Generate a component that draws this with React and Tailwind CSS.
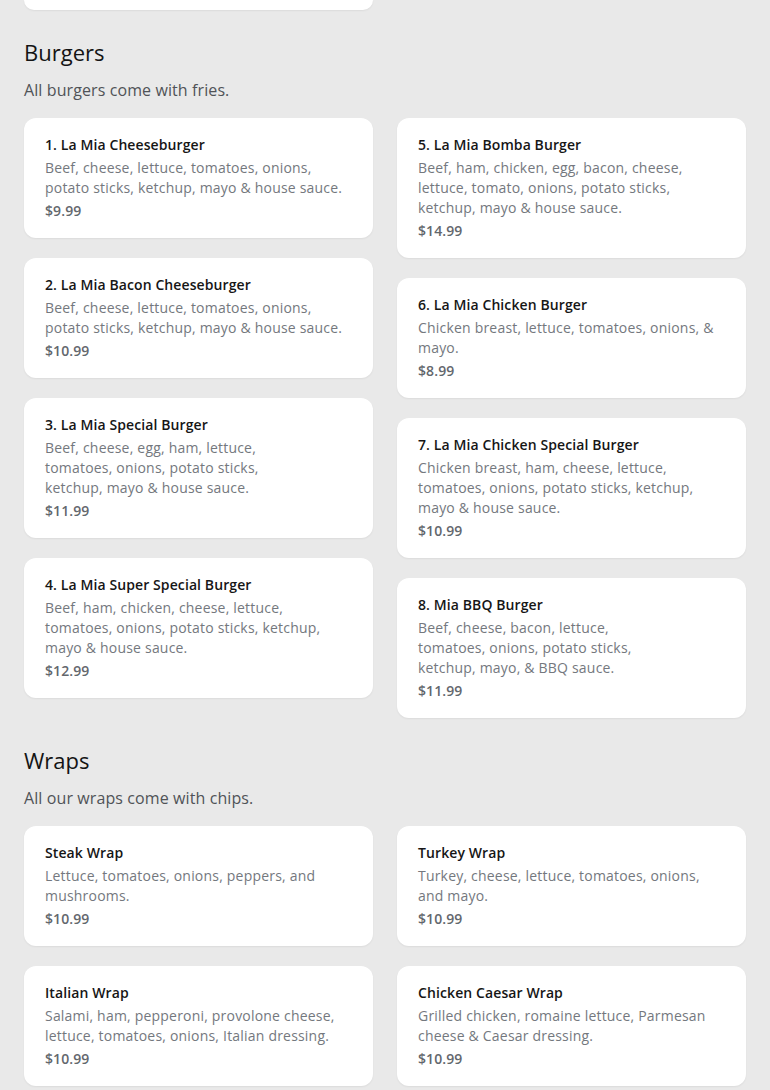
import React from "react";

const burgersLeft = [
  { t: "1. La Mia Cheeseburger", lines: ["Beef, cheese, lettuce, tomatoes, onions,", "potato sticks, ketchup, mayo & house sauce."], p: "$9.99" },
  { t: "2. La Mia Bacon Cheeseburger", lines: ["Beef, cheese, lettuce, tomatoes, onions,", "potato sticks, ketchup, mayo & house sauce."], p: "$10.99" },
  { t: "3. La Mia Special Burger", lines: ["Beef, cheese, egg, ham, lettuce,", "tomatoes, onions, potato sticks,", "ketchup, mayo & house sauce."], p: "$11.99" },
  { t: "4. La Mia Super Special Burger", lines: ["Beef, ham, chicken, cheese, lettuce,", "tomatoes, onions, potato sticks, ketchup,", "mayo & house sauce."], p: "$12.99" },
];
const burgersRight = [
  { t: "5. La Mia Bomba Burger", lines: ["Beef, ham, chicken, egg, bacon, cheese,", "lettuce, tomato, onions, potato sticks,", "ketchup, mayo & house sauce."], p: "$14.99" },
  { t: "6. La Mia Chicken Burger", lines: ["Chicken breast, lettuce, tomatoes, onions, &", "mayo."], p: "$8.99" },
  { t: "7. La Mia Chicken Special Burger", lines: ["Chicken breast, ham, cheese, lettuce,", "tomatoes, onions, potato sticks, ketchup,", "mayo & house sauce."], p: "$10.99" },
  { t: "8. Mia BBQ Burger", lines: ["Beef, cheese, bacon, lettuce,", "tomatoes, onions, potato sticks,", "ketchup, mayo, & BBQ sauce."], p: "$11.99" },
];
const wrapsLeft = [
  { t: "Steak Wrap", lines: ["Lettuce, tomatoes, onions, peppers, and", "mushrooms."], p: "$10.99" },
  { t: "Italian Wrap", lines: ["Salami, ham, pepperoni, provolone cheese,", "lettuce, tomatoes, onions, Italian dressing."], p: "$10.99" },
];
const wrapsRight = [
  { t: "Turkey Wrap", lines: ["Turkey, cheese, lettuce, tomatoes, onions,", "and mayo."], p: "$10.99" },
  { t: "Chicken Caesar Wrap", lines: ["Grilled chicken, romaine lettuce, Parmesan", "cheese & Caesar dressing."], p: "$10.99" },
];

function Card({ item }) {
  return (
    <div className="bg-white rounded-xl shadow-[0_1px_2px_rgba(0,0,0,0.06)] pl-[21px] pr-4 pt-[17px] pb-[17px]">
      <div className="text-[14px] leading-5 font-semibold tracking-[0.1px] text-[#161616]">{item.t}</div>
      <div className="mt-[3px] text-[14px] leading-5 tracking-[0.2px] text-[#74787e] whitespace-nowrap">
        {item.lines.map((l, i) => <div key={i}>{l}</div>)}
      </div>
      <div className="mt-[3px] text-[14px] leading-5 font-semibold tracking-[0.1px] text-[#63676d]">{item.p}</div>
    </div>
  );
}

function Section({ title, sub, left, right }) {
  return (
    <section className="pt-[26px]">
      <h2 className="text-[22px] leading-8 text-[#141414]">{title}</h2>
      <p className="mt-[10px] text-[16px] leading-6 tracking-[0.1px] text-[#505357]">{sub}</p>
      <div className="mt-4 grid grid-cols-2 gap-6 items-start">
        <div className="flex flex-col gap-5">
          {left.map((it, i) => <Card key={i} item={it} />)}
        </div>
        <div className="flex flex-col gap-5">
          {right.map((it, i) => <Card key={i} item={it} />)}
        </div>
      </div>
    </section>
  );
}

export default function App() {
  return (
    <div className="min-h-[1090px] bg-[#e9e9e9] px-6 pb-10" style={{ fontFamily: '"Open Sans", "Noto Sans", sans-serif' }}>
      <div className="grid grid-cols-2 gap-6">
        <div className="h-[10px] bg-white rounded-b-xl shadow-[0_1px_2px_rgba(0,0,0,0.06)]" />
      </div>
      <Section title="Burgers" sub="All burgers come with fries." left={burgersLeft} right={burgersRight} />
      <Section title="Wraps" sub="All our wraps come with chips." left={wrapsLeft} right={wrapsRight} />
    </div>
  );
}
